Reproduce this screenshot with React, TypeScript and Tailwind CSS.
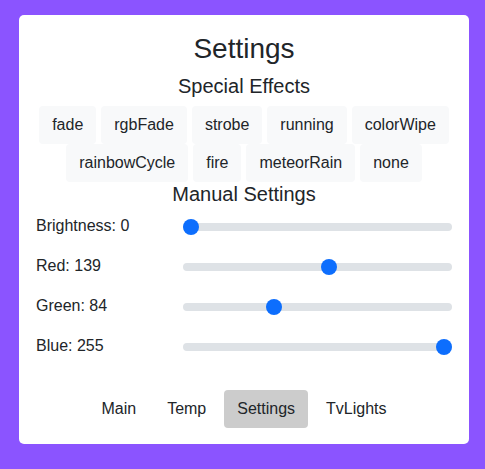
import React from "react";

const effects1 = ["fade", "rgbFade", "strobe", "running", "colorWipe"];
const effects2 = ["rainbowCycle", "fire", "meteorRain", "none"];
const sliders = [
  { label: "Brightness: 0", value: 0 },
  { label: "Red: 139", value: 139 },
  { label: "Green: 84", value: 84 },
  { label: "Blue: 255", value: 255 },
];
const nav = ["Main", "Temp", "Settings", "TvLights"];

function Slider({ value }: { value: number }) {
  return (
    <div className="relative flex-1 h-4 flex items-center">
      <div className="w-full h-2 rounded-full bg-[#dee2e6]" />
      <div
        className="absolute top-0 w-4 h-4 rounded-full bg-[#0d6efd]"
        style={{ left: `calc((100% - 16px) * ${value / 255})` }}
      />
    </div>
  );
}

export default function App() {
  return (
    <div
      className="w-[485px] h-[469px] bg-[#8b54ff] pt-[15px] pl-[19px] text-[#212529]"
      style={{ fontFamily: '"Liberation Sans", Arial, sans-serif' }}
    >
      <div className="w-[450px] h-[429px] bg-white rounded-[5px] px-[17px] pt-[17px] flex flex-col">
        <h1 className="text-center text-[28px] leading-[34px] mb-[8px]">Settings</h1>
        <h2 className="text-center text-[20px] leading-[24px] mb-[8px]">Special Effects</h2>
        <div className="flex flex-col items-center">
          <div className="flex justify-center gap-x-[5px]">
            {effects1.map((e) => (
              <div key={e} className="bg-[#f8f9fa] rounded-[4px] px-[13px] py-[7px] text-[16px] leading-[24px]">
                {e}
              </div>
            ))}
          </div>
          <div className="flex justify-center gap-x-[5px]">
            {effects2.map((e) => (
              <div key={e} className="bg-[#f8f9fa] rounded-[4px] px-[13px] py-[7px] text-[16px] leading-[24px]">
                {e}
              </div>
            ))}
          </div>
        </div>
        <h2 className="text-center text-[20px] leading-[24px] mb-[8px]">Manual Settings</h2>
        <div className="flex flex-col gap-[16px]">
          {sliders.map((s) => (
            <div key={s.label} className="flex items-center h-6 text-[16px] leading-[24px]">
              <div className="w-[147px]">{s.label}</div>
              <div className="flex-1 flex pt-[1px]">
                <Slider value={s.value} />
              </div>
            </div>
          ))}
        </div>
        <div className="flex justify-center gap-x-[5px] mt-[32px]">
          {nav.map((n) => (
            <div
              key={n}
              className={
                n === "Settings"
                  ? "bg-[#cccccc] rounded-[4px] px-[13px] py-[7px] text-[16px] leading-[24px]"
                  : "rounded-[4px] px-[13px] py-[7px] text-[16px] leading-[24px]"
              }
            >
              {n}
            </div>
          ))}
        </div>
      </div>
    </div>
  );
}
